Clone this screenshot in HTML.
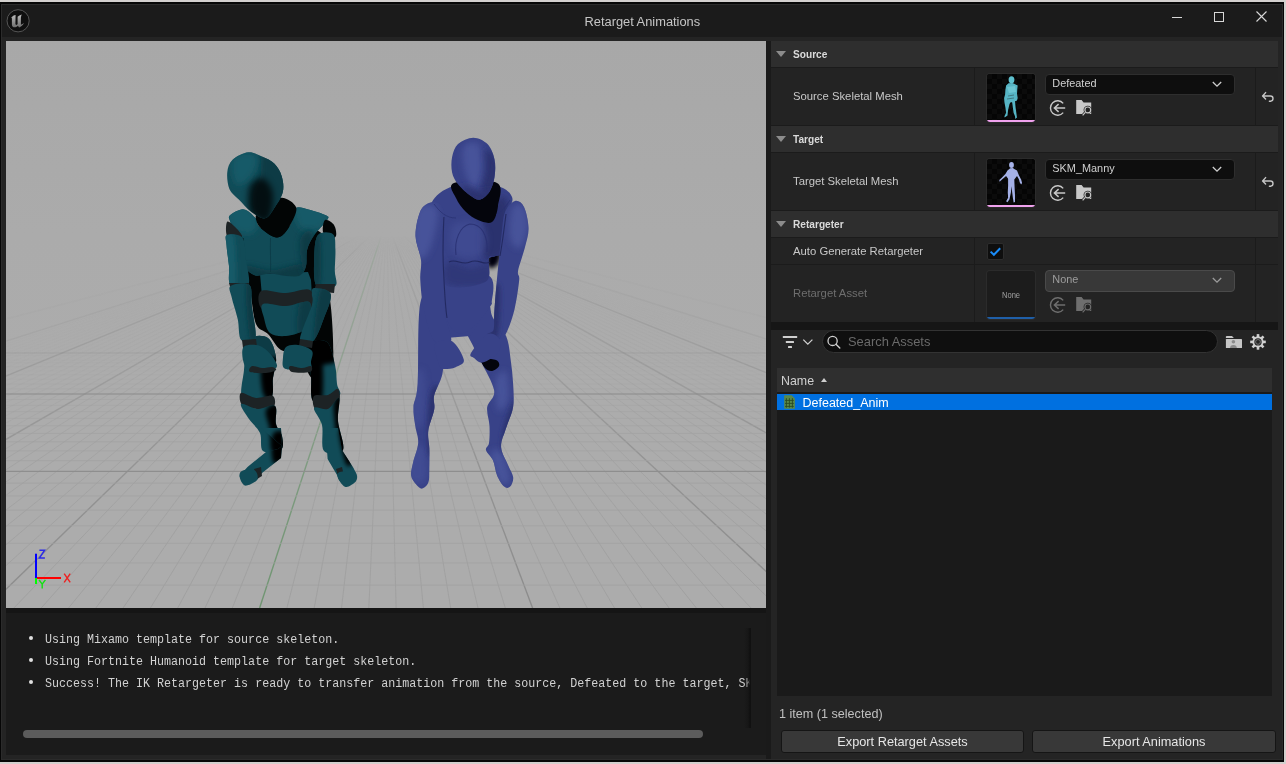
<!DOCTYPE html>
<html><head><meta charset="utf-8">
<style>
*{box-sizing:border-box;margin:0;padding:0}
html,body{width:1286px;height:764px;overflow:hidden;background:#d3d0ce;font-family:"Liberation Sans",sans-serif;-webkit-font-smoothing:antialiased}
.a{position:absolute}
.t{position:absolute;white-space:nowrap;line-height:1}
.hdr{position:absolute;left:771px;width:507px;height:26px;background:#2e2e2e}
.row{position:absolute;left:771px;width:507px;background:#232323}
.sep{position:absolute;left:771px;width:507px;height:1px;background:#1a1a1a}
.tri{position:absolute;width:0;height:0;border-left:5.2px solid transparent;border-right:5.2px solid transparent;border-top:6.4px solid #8c8c8c}
.ht{position:absolute;left:793px;font-size:10.9px;font-weight:bold;color:#dadada;white-space:nowrap;line-height:1;transform:scaleX(0.93);transform-origin:0 0}
.lbl{position:absolute;left:793px;font-size:11.3px;color:#c8c8c8;white-space:nowrap;line-height:1}
.vdiv{position:absolute;width:1px;background:#1b1b1b}
.thumb{position:absolute;left:987px;width:48px;height:48px;border-radius:3px;background:#050505;overflow:hidden;box-shadow:0 0 0 1px #2b2b2b}
.combo{position:absolute;left:1045px;width:190px;height:21px;border-radius:4px;background:#0e0e0e;border:1px solid #2e2e2e}
.ct{position:absolute;left:6.3px;top:3.7px;font-size:10.9px;color:#d0d0d0;white-space:nowrap;line-height:1}
.chev{position:absolute;left:166.2px;top:6px}
.btn{position:absolute;top:729.5px;height:23px;border-radius:3px;background:#383838;border:1px solid #151515;color:#e6e6e6;font-size:12.75px;text-align:center;line-height:21px}
</style></head><body><div style="position:absolute;left:0;top:0;width:1286px;height:764px;overflow:hidden;will-change:transform">
<!-- window -->
<div class="a" style="left:0;top:2px;width:1284px;height:760px;background:#060606"></div>
<div class="a" style="left:1px;top:4px;width:1282px;height:756px;background:#2b2b2b"></div>
<div class="a" style="left:2px;top:5px;width:1280px;height:32px;background:#1b1b1b"></div>
<div class="a" style="left:2px;top:37px;width:1280px;height:722px;background:#242424"></div>

<!-- title bar -->
<svg class="a" style="left:0;top:0" width="40" height="40" viewBox="0 0 40 40">
  <defs><linearGradient id="ug" x1="0" y1="0" x2="0" y2="1"><stop offset="0" stop-color="#bdbdbd"/><stop offset="1" stop-color="#6e6e6e"/></linearGradient></defs>
  <circle cx="18.1" cy="20.8" r="11.1" fill="#0f0f0f" stroke="#5c5c5c" stroke-width="0.9"/>
  <path d="M11.2 17.8 C12.4 16 14 15.2 15.6 15 L15.4 23.8 C15.4 25 16.4 25.2 17.2 24.4 L17.6 24.1 L17.6 16.8 C18.6 15.8 20 15 21.8 14.4 C21.1 15.8 20.9 17 20.9 18.6 L20.9 24.8 C21.9 24.4 22.9 23.8 24 23 C23 25.2 21.1 26.8 19.1 27.4 L17.9 25.8 C16.5 27.2 14.7 27.6 13.5 27.2 C12.3 26.6 11.9 25.4 11.9 24.2 L11.9 18.2 Z" fill="url(#ug)"/>
</svg>
<div class="t" style="left:584.5px;top:15.5px;font-size:12.85px;color:#c6c6c6">Retarget Animations</div>
<div class="a" style="left:1172px;top:17px;width:10px;height:1px;background:#d8d8d8"></div>
<div class="a" style="left:1214px;top:12px;width:10px;height:10px;border:1px solid #d8d8d8"></div>
<svg class="a" style="left:1255.5px;top:11px" width="11" height="11" viewBox="0 0 11 11"><path d="M0.5 0.5 L10.5 10.5 M10.5 0.5 L0.5 10.5" stroke="#d8d8d8" stroke-width="1.1"/></svg>

<!-- viewport -->
<div class="a" id="vp" style="left:6px;top:41px;width:760px;height:567px;background:#ababab;overflow:hidden">
<svg class="a" style="left:0;top:0" width="760" height="567" viewBox="0 0 760 567">
<defs><linearGradient id="bg" x1="0" y1="0" x2="0" y2="1"><stop offset="0" stop-color="#a8a8a8"/><stop offset="0.34" stop-color="#ababab"/><stop offset="0.6" stop-color="#acacac"/><stop offset="1" stop-color="#acacac"/></linearGradient><linearGradient id="vm" x1="0" y1="0" x2="0" y2="1"><stop offset="0" stop-color="#fff" stop-opacity="0"/><stop offset="0.344" stop-color="#fff" stop-opacity="0"/><stop offset="0.370" stop-color="#fff" stop-opacity="0.22"/><stop offset="0.459" stop-color="#fff" stop-opacity="0.33"/><stop offset="0.582" stop-color="#fff" stop-opacity="0.47"/><stop offset="0.741" stop-color="#fff" stop-opacity="0.75"/><stop offset="1" stop-color="#fff" stop-opacity="1"/></linearGradient><mask id="vmask" maskUnits="userSpaceOnUse" x="0" y="0" width="760" height="567"><rect width="760" height="567" fill="url(#vm)"/></mask></defs>
<rect width="760" height="567" fill="url(#bg)"/>
<g mask="url(#vmask)">
<line x1="380.50" y1="179.00" x2="-1111.40" y2="567" stroke="#8c8c8c" stroke-width="1.4" stroke-opacity="0.17"/>
<line x1="380.50" y1="179.00" x2="-838.40" y2="567" stroke="#8c8c8c" stroke-width="1.4" stroke-opacity="0.54"/>
<line x1="380.50" y1="179.00" x2="-811.10" y2="567" stroke="#9d9d9d" stroke-width="0.8" stroke-opacity="0.05"/>
<line x1="380.50" y1="179.00" x2="-783.80" y2="567" stroke="#9d9d9d" stroke-width="0.8" stroke-opacity="0.07"/>
<line x1="380.50" y1="179.00" x2="-756.50" y2="567" stroke="#9d9d9d" stroke-width="0.8" stroke-opacity="0.10"/>
<line x1="380.50" y1="179.00" x2="-729.20" y2="567" stroke="#9d9d9d" stroke-width="0.8" stroke-opacity="0.12"/>
<line x1="380.50" y1="179.00" x2="-701.90" y2="567" stroke="#9d9d9d" stroke-width="0.8" stroke-opacity="0.14"/>
<line x1="380.50" y1="179.00" x2="-674.60" y2="567" stroke="#9d9d9d" stroke-width="0.8" stroke-opacity="0.17"/>
<line x1="380.50" y1="179.00" x2="-647.30" y2="567" stroke="#9d9d9d" stroke-width="0.8" stroke-opacity="0.20"/>
<line x1="380.50" y1="179.00" x2="-620.00" y2="567" stroke="#9d9d9d" stroke-width="0.8" stroke-opacity="0.23"/>
<line x1="380.50" y1="179.00" x2="-592.70" y2="567" stroke="#9d9d9d" stroke-width="0.8" stroke-opacity="0.26"/>
<line x1="380.50" y1="179.00" x2="-565.40" y2="567" stroke="#8c8c8c" stroke-width="1.4" stroke-opacity="1.00"/>
<line x1="380.50" y1="179.00" x2="-538.10" y2="567" stroke="#9d9d9d" stroke-width="0.8" stroke-opacity="0.33"/>
<line x1="380.50" y1="179.00" x2="-510.80" y2="567" stroke="#9d9d9d" stroke-width="0.8" stroke-opacity="0.37"/>
<line x1="380.50" y1="179.00" x2="-483.50" y2="567" stroke="#9d9d9d" stroke-width="0.8" stroke-opacity="0.41"/>
<line x1="380.50" y1="179.00" x2="-456.20" y2="567" stroke="#9d9d9d" stroke-width="0.8" stroke-opacity="0.46"/>
<line x1="380.50" y1="179.00" x2="-428.90" y2="567" stroke="#9d9d9d" stroke-width="0.8" stroke-opacity="0.51"/>
<line x1="380.50" y1="179.00" x2="-401.60" y2="567" stroke="#9d9d9d" stroke-width="0.8" stroke-opacity="0.56"/>
<line x1="380.50" y1="179.00" x2="-374.30" y2="567" stroke="#9d9d9d" stroke-width="0.8" stroke-opacity="0.62"/>
<line x1="380.50" y1="179.00" x2="-347.00" y2="567" stroke="#9d9d9d" stroke-width="0.8" stroke-opacity="0.68"/>
<line x1="380.50" y1="179.00" x2="-319.70" y2="567" stroke="#9d9d9d" stroke-width="0.8" stroke-opacity="0.75"/>
<line x1="380.50" y1="179.00" x2="-292.40" y2="567" stroke="#8c8c8c" stroke-width="1.4" stroke-opacity="1.00"/>
<line x1="380.50" y1="179.00" x2="-265.10" y2="567" stroke="#9d9d9d" stroke-width="0.8" stroke-opacity="0.91"/>
<line x1="380.50" y1="179.00" x2="-237.80" y2="567" stroke="#9d9d9d" stroke-width="0.8" stroke-opacity="0.99"/>
<line x1="380.50" y1="179.00" x2="-210.50" y2="567" stroke="#9d9d9d" stroke-width="0.8" stroke-opacity="1.00"/>
<line x1="380.50" y1="179.00" x2="-183.20" y2="567" stroke="#9d9d9d" stroke-width="0.8" stroke-opacity="1.00"/>
<line x1="380.50" y1="179.00" x2="-155.90" y2="567" stroke="#9d9d9d" stroke-width="0.8" stroke-opacity="1.00"/>
<line x1="380.50" y1="179.00" x2="-128.60" y2="567" stroke="#9d9d9d" stroke-width="0.8" stroke-opacity="1.00"/>
<line x1="380.50" y1="179.00" x2="-101.30" y2="567" stroke="#9d9d9d" stroke-width="0.8" stroke-opacity="1.00"/>
<line x1="380.50" y1="179.00" x2="-74.00" y2="567" stroke="#9d9d9d" stroke-width="0.8" stroke-opacity="1.00"/>
<line x1="380.50" y1="179.00" x2="-46.70" y2="567" stroke="#9d9d9d" stroke-width="0.8" stroke-opacity="1.00"/>
<line x1="380.50" y1="179.00" x2="-19.40" y2="567" stroke="#8c8c8c" stroke-width="1.4" stroke-opacity="1.00"/>
<line x1="380.50" y1="179.00" x2="7.90" y2="567" stroke="#9d9d9d" stroke-width="0.8" stroke-opacity="1.00"/>
<line x1="380.50" y1="179.00" x2="35.20" y2="567" stroke="#9d9d9d" stroke-width="0.8" stroke-opacity="1.00"/>
<line x1="380.50" y1="179.00" x2="62.50" y2="567" stroke="#9d9d9d" stroke-width="0.8" stroke-opacity="1.00"/>
<line x1="380.50" y1="179.00" x2="89.80" y2="567" stroke="#9d9d9d" stroke-width="0.8" stroke-opacity="1.00"/>
<line x1="380.50" y1="179.00" x2="117.10" y2="567" stroke="#9d9d9d" stroke-width="0.8" stroke-opacity="1.00"/>
<line x1="380.50" y1="179.00" x2="144.40" y2="567" stroke="#9d9d9d" stroke-width="0.8" stroke-opacity="1.00"/>
<line x1="380.50" y1="179.00" x2="171.70" y2="567" stroke="#9d9d9d" stroke-width="0.8" stroke-opacity="1.00"/>
<line x1="380.50" y1="179.00" x2="199.00" y2="567" stroke="#9d9d9d" stroke-width="0.8" stroke-opacity="1.00"/>
<line x1="380.50" y1="179.00" x2="226.30" y2="567" stroke="#9d9d9d" stroke-width="0.8" stroke-opacity="1.00"/>
<line x1="380.50" y1="179.00" x2="253.60" y2="567" stroke="#6f9571" stroke-width="1.4" stroke-opacity="1.00"/>
<line x1="380.50" y1="179.00" x2="280.90" y2="567" stroke="#9d9d9d" stroke-width="0.8" stroke-opacity="1.00"/>
<line x1="380.50" y1="179.00" x2="308.20" y2="567" stroke="#9d9d9d" stroke-width="0.8" stroke-opacity="1.00"/>
<line x1="380.50" y1="179.00" x2="335.50" y2="567" stroke="#9d9d9d" stroke-width="0.8" stroke-opacity="1.00"/>
<line x1="380.50" y1="179.00" x2="362.80" y2="567" stroke="#9d9d9d" stroke-width="0.8" stroke-opacity="1.00"/>
<line x1="380.50" y1="179.00" x2="390.10" y2="567" stroke="#9d9d9d" stroke-width="0.8" stroke-opacity="1.00"/>
<line x1="380.50" y1="179.00" x2="417.40" y2="567" stroke="#9d9d9d" stroke-width="0.8" stroke-opacity="1.00"/>
<line x1="380.50" y1="179.00" x2="444.70" y2="567" stroke="#9d9d9d" stroke-width="0.8" stroke-opacity="1.00"/>
<line x1="380.50" y1="179.00" x2="472.00" y2="567" stroke="#9d9d9d" stroke-width="0.8" stroke-opacity="1.00"/>
<line x1="380.50" y1="179.00" x2="499.30" y2="567" stroke="#9d9d9d" stroke-width="0.8" stroke-opacity="1.00"/>
<line x1="380.50" y1="179.00" x2="526.60" y2="567" stroke="#8c8c8c" stroke-width="1.4" stroke-opacity="1.00"/>
<line x1="380.50" y1="179.00" x2="553.90" y2="567" stroke="#9d9d9d" stroke-width="0.8" stroke-opacity="1.00"/>
<line x1="380.50" y1="179.00" x2="581.20" y2="567" stroke="#9d9d9d" stroke-width="0.8" stroke-opacity="1.00"/>
<line x1="380.50" y1="179.00" x2="608.50" y2="567" stroke="#9d9d9d" stroke-width="0.8" stroke-opacity="1.00"/>
<line x1="380.50" y1="179.00" x2="635.80" y2="567" stroke="#9d9d9d" stroke-width="0.8" stroke-opacity="1.00"/>
<line x1="380.50" y1="179.00" x2="663.10" y2="567" stroke="#9d9d9d" stroke-width="0.8" stroke-opacity="1.00"/>
<line x1="380.50" y1="179.00" x2="690.40" y2="567" stroke="#9d9d9d" stroke-width="0.8" stroke-opacity="1.00"/>
<line x1="380.50" y1="179.00" x2="717.70" y2="567" stroke="#9d9d9d" stroke-width="0.8" stroke-opacity="1.00"/>
<line x1="380.50" y1="179.00" x2="745.00" y2="567" stroke="#9d9d9d" stroke-width="0.8" stroke-opacity="1.00"/>
<line x1="380.50" y1="179.00" x2="772.30" y2="567" stroke="#9d9d9d" stroke-width="0.8" stroke-opacity="1.00"/>
<line x1="380.50" y1="179.00" x2="799.60" y2="567" stroke="#8c8c8c" stroke-width="1.4" stroke-opacity="1.00"/>
<line x1="380.50" y1="179.00" x2="826.90" y2="567" stroke="#9d9d9d" stroke-width="0.8" stroke-opacity="1.00"/>
<line x1="380.50" y1="179.00" x2="854.20" y2="567" stroke="#9d9d9d" stroke-width="0.8" stroke-opacity="1.00"/>
<line x1="380.50" y1="179.00" x2="881.50" y2="567" stroke="#9d9d9d" stroke-width="0.8" stroke-opacity="1.00"/>
<line x1="380.50" y1="179.00" x2="908.80" y2="567" stroke="#9d9d9d" stroke-width="0.8" stroke-opacity="1.00"/>
<line x1="380.50" y1="179.00" x2="936.10" y2="567" stroke="#9d9d9d" stroke-width="0.8" stroke-opacity="1.00"/>
<line x1="380.50" y1="179.00" x2="963.40" y2="567" stroke="#9d9d9d" stroke-width="0.8" stroke-opacity="1.00"/>
<line x1="380.50" y1="179.00" x2="990.70" y2="567" stroke="#9d9d9d" stroke-width="0.8" stroke-opacity="1.00"/>
<line x1="380.50" y1="179.00" x2="1018.00" y2="567" stroke="#9d9d9d" stroke-width="0.8" stroke-opacity="0.93"/>
<line x1="380.50" y1="179.00" x2="1045.30" y2="567" stroke="#9d9d9d" stroke-width="0.8" stroke-opacity="0.85"/>
<line x1="380.50" y1="179.00" x2="1072.60" y2="567" stroke="#8c8c8c" stroke-width="1.4" stroke-opacity="1.00"/>
<line x1="380.50" y1="179.00" x2="1099.90" y2="567" stroke="#9d9d9d" stroke-width="0.8" stroke-opacity="0.70"/>
<line x1="380.50" y1="179.00" x2="1127.20" y2="567" stroke="#9d9d9d" stroke-width="0.8" stroke-opacity="0.64"/>
<line x1="380.50" y1="179.00" x2="1154.50" y2="567" stroke="#9d9d9d" stroke-width="0.8" stroke-opacity="0.58"/>
<line x1="380.50" y1="179.00" x2="1181.80" y2="567" stroke="#9d9d9d" stroke-width="0.8" stroke-opacity="0.53"/>
<line x1="380.50" y1="179.00" x2="1209.10" y2="567" stroke="#9d9d9d" stroke-width="0.8" stroke-opacity="0.48"/>
<line x1="380.50" y1="179.00" x2="1236.40" y2="567" stroke="#9d9d9d" stroke-width="0.8" stroke-opacity="0.43"/>
<line x1="380.50" y1="179.00" x2="1263.70" y2="567" stroke="#9d9d9d" stroke-width="0.8" stroke-opacity="0.38"/>
<line x1="380.50" y1="179.00" x2="1291.00" y2="567" stroke="#9d9d9d" stroke-width="0.8" stroke-opacity="0.34"/>
<line x1="380.50" y1="179.00" x2="1318.30" y2="567" stroke="#9d9d9d" stroke-width="0.8" stroke-opacity="0.31"/>
<line x1="380.50" y1="179.00" x2="1345.60" y2="567" stroke="#8c8c8c" stroke-width="1.4" stroke-opacity="1.00"/>
<line x1="380.50" y1="179.00" x2="1372.90" y2="567" stroke="#9d9d9d" stroke-width="0.8" stroke-opacity="0.24"/>
<line x1="380.50" y1="179.00" x2="1400.20" y2="567" stroke="#9d9d9d" stroke-width="0.8" stroke-opacity="0.21"/>
<line x1="380.50" y1="179.00" x2="1427.50" y2="567" stroke="#9d9d9d" stroke-width="0.8" stroke-opacity="0.18"/>
<line x1="380.50" y1="179.00" x2="1454.80" y2="567" stroke="#9d9d9d" stroke-width="0.8" stroke-opacity="0.15"/>
<line x1="380.50" y1="179.00" x2="1482.10" y2="567" stroke="#9d9d9d" stroke-width="0.8" stroke-opacity="0.13"/>
<line x1="380.50" y1="179.00" x2="1509.40" y2="567" stroke="#9d9d9d" stroke-width="0.8" stroke-opacity="0.10"/>
<line x1="380.50" y1="179.00" x2="1536.70" y2="567" stroke="#9d9d9d" stroke-width="0.8" stroke-opacity="0.08"/>
<line x1="380.50" y1="179.00" x2="1564.00" y2="567" stroke="#9d9d9d" stroke-width="0.8" stroke-opacity="0.06"/>
<line x1="380.50" y1="179.00" x2="1591.30" y2="567" stroke="#9d9d9d" stroke-width="0.8" stroke-opacity="0.04"/>
<line x1="380.50" y1="179.00" x2="1618.60" y2="567" stroke="#8c8c8c" stroke-width="1.4" stroke-opacity="0.51"/>
<line x1="380.50" y1="179.00" x2="1891.60" y2="567" stroke="#8c8c8c" stroke-width="1.4" stroke-opacity="0.15"/>
</g>
<line x1="0" y1="631.90" x2="760" y2="631.90" stroke="#8e8e8e" stroke-width="1.4" stroke-opacity="1.00"/>
<line x1="0" y1="598.29" x2="760" y2="598.29" stroke="#a1a1a1" stroke-width="0.8" stroke-opacity="1.00"/>
<line x1="0" y1="569.32" x2="760" y2="569.32" stroke="#a1a1a1" stroke-width="0.8" stroke-opacity="1.00"/>
<line x1="0" y1="544.10" x2="760" y2="544.10" stroke="#a1a1a1" stroke-width="0.8" stroke-opacity="1.00"/>
<line x1="0" y1="521.94" x2="760" y2="521.94" stroke="#a1a1a1" stroke-width="0.8" stroke-opacity="1.00"/>
<line x1="0" y1="502.31" x2="760" y2="502.31" stroke="#a1a1a1" stroke-width="0.8" stroke-opacity="1.00"/>
<line x1="0" y1="484.81" x2="760" y2="484.81" stroke="#a1a1a1" stroke-width="0.8" stroke-opacity="1.00"/>
<line x1="0" y1="469.11" x2="760" y2="469.11" stroke="#a1a1a1" stroke-width="0.8" stroke-opacity="1.00"/>
<line x1="0" y1="454.94" x2="760" y2="454.94" stroke="#a1a1a1" stroke-width="0.8" stroke-opacity="1.00"/>
<line x1="0" y1="442.09" x2="760" y2="442.09" stroke="#a1a1a1" stroke-width="0.8" stroke-opacity="1.00"/>
<line x1="0" y1="430.38" x2="760" y2="430.38" stroke="#8e8e8e" stroke-width="1.4" stroke-opacity="1.00"/>
<line x1="0" y1="419.67" x2="760" y2="419.67" stroke="#a1a1a1" stroke-width="0.8" stroke-opacity="1.00"/>
<line x1="0" y1="409.84" x2="760" y2="409.84" stroke="#a1a1a1" stroke-width="0.8" stroke-opacity="0.92"/>
<line x1="0" y1="400.78" x2="760" y2="400.78" stroke="#a1a1a1" stroke-width="0.8" stroke-opacity="0.83"/>
<line x1="0" y1="392.40" x2="760" y2="392.40" stroke="#a1a1a1" stroke-width="0.8" stroke-opacity="0.76"/>
<line x1="0" y1="384.63" x2="760" y2="384.63" stroke="#a1a1a1" stroke-width="0.8" stroke-opacity="0.69"/>
<line x1="0" y1="377.41" x2="760" y2="377.41" stroke="#a1a1a1" stroke-width="0.8" stroke-opacity="0.62"/>
<line x1="0" y1="370.68" x2="760" y2="370.68" stroke="#a1a1a1" stroke-width="0.8" stroke-opacity="0.56"/>
<line x1="0" y1="364.39" x2="760" y2="364.39" stroke="#a1a1a1" stroke-width="0.8" stroke-opacity="0.50"/>
<line x1="0" y1="358.50" x2="760" y2="358.50" stroke="#a1a1a1" stroke-width="0.8" stroke-opacity="0.45"/>
<line x1="0" y1="352.97" x2="760" y2="352.97" stroke="#8e8e8e" stroke-width="1.4" stroke-opacity="0.74"/>
<line x1="0" y1="347.78" x2="760" y2="347.78" stroke="#a1a1a1" stroke-width="0.8" stroke-opacity="0.35"/>
<line x1="0" y1="342.88" x2="760" y2="342.88" stroke="#a1a1a1" stroke-width="0.8" stroke-opacity="0.31"/>
<line x1="0" y1="338.26" x2="760" y2="338.26" stroke="#a1a1a1" stroke-width="0.8" stroke-opacity="0.27"/>
<line x1="0" y1="333.89" x2="760" y2="333.89" stroke="#a1a1a1" stroke-width="0.8" stroke-opacity="0.23"/>
<line x1="0" y1="329.76" x2="760" y2="329.76" stroke="#a1a1a1" stroke-width="0.8" stroke-opacity="0.19"/>
<line x1="0" y1="325.84" x2="760" y2="325.84" stroke="#a1a1a1" stroke-width="0.8" stroke-opacity="0.15"/>
<line x1="0" y1="322.12" x2="760" y2="322.12" stroke="#a1a1a1" stroke-width="0.8" stroke-opacity="0.12"/>
<line x1="0" y1="318.59" x2="760" y2="318.59" stroke="#a1a1a1" stroke-width="0.8" stroke-opacity="0.09"/>
<line x1="0" y1="315.22" x2="760" y2="315.22" stroke="#a1a1a1" stroke-width="0.8" stroke-opacity="0.06"/>
<line x1="0" y1="312.01" x2="760" y2="312.01" stroke="#8e8e8e" stroke-width="1.4" stroke-opacity="0.23"/>
</svg>
<svg class="a" style="left:0;top:0" width="760" height="567" viewBox="6 41 760 567"><defs><filter id="bl2" x="-50%" y="-50%" width="200%" height="200%"><feGaussianBlur stdDeviation="2"/></filter><filter id="bl3" x="-50%" y="-50%" width="200%" height="200%"><feGaussianBlur stdDeviation="3"/></filter></defs><path d="M244.0 232.0 C256.7 226.0 307.7 222.7 320.0 232.0 C332.3 241.3 316.3 276.7 318.0 288.0 C319.7 299.3 327.7 286.0 330.0 300.0 C332.3 314.0 335.0 359.0 332.0 372.0 C329.0 385.0 317.3 381.0 312.0 378.0 C306.7 375.0 305.2 358.7 300.0 354.0 C294.8 349.3 286.3 353.3 281.0 350.0 C275.7 346.7 272.2 338.3 268.0 334.0 C263.8 329.7 259.0 331.3 256.0 324.0 C253.0 316.7 252.0 299.3 250.0 290.0 C248.0 280.7 245.0 277.7 244.0 268.0 C243.0 258.3 231.3 238.0 244.0 232.0Z" fill="#020505" />
<clipPath id="c1"><path d="M249.0 340.0 C253.0 334.7 263.5 335.0 268.0 338.0 C272.5 341.0 275.2 351.3 276.0 358.0 C276.8 364.7 274.0 371.2 273.0 378.0 C272.0 384.8 275.0 395.3 270.0 399.0 C265.0 402.7 247.3 404.8 243.0 400.0 C238.7 395.2 243.0 380.0 244.0 370.0 C245.0 360.0 245.0 345.3 249.0 340.0Z"/></clipPath>
<path d="M249.0 340.0 C253.0 334.7 263.5 335.0 268.0 338.0 C272.5 341.0 275.2 351.3 276.0 358.0 C276.8 364.7 274.0 371.2 273.0 378.0 C272.0 384.8 275.0 395.3 270.0 399.0 C265.0 402.7 247.3 404.8 243.0 400.0 C238.7 395.2 243.0 380.0 244.0 370.0 C245.0 360.0 245.0 345.3 249.0 340.0Z" fill="#114b57"/>
<g clip-path="url(#c1)">
<path d="M262.0 360.0 C264.7 353.3 277.0 350.0 280.0 356.0 C283.0 362.0 282.7 389.3 280.0 396.0 C277.3 402.7 267.0 402.0 264.0 396.0 C261.0 390.0 259.3 366.7 262.0 360.0Z" fill="#020505" filter="url(#bl2)"/>
<path d="M240.0 330.0 C247.0 326.3 275.0 325.7 282.0 330.0 C289.0 334.3 289.0 352.3 282.0 356.0 C275.0 359.7 247.0 356.3 240.0 352.0 C233.0 347.7 233.0 333.7 240.0 330.0Z" fill="#0a3a45" filter="url(#bl2)"/>
</g>
<clipPath id="c2"><path d="M309.0 345.0 C311.7 339.3 322.7 338.7 327.0 342.0 C331.3 345.3 333.3 358.0 335.0 365.0 C336.7 372.0 336.3 378.8 337.0 384.0 C337.7 389.2 342.8 393.0 339.0 396.0 C335.2 399.0 318.7 405.3 314.0 402.0 C309.3 398.7 311.8 385.5 311.0 376.0 C310.2 366.5 306.3 350.7 309.0 345.0Z"/></clipPath>
<path d="M309.0 345.0 C311.7 339.3 322.7 338.7 327.0 342.0 C331.3 345.3 333.3 358.0 335.0 365.0 C336.7 372.0 336.3 378.8 337.0 384.0 C337.7 389.2 342.8 393.0 339.0 396.0 C335.2 399.0 318.7 405.3 314.0 402.0 C309.3 398.7 311.8 385.5 311.0 376.0 C310.2 366.5 306.3 350.7 309.0 345.0Z" fill="#114b57"/>
<g clip-path="url(#c2)">
<path d="M304.0 340.0 C306.3 330.0 317.0 330.0 320.0 340.0 C323.0 350.0 324.3 390.0 322.0 400.0 C319.7 410.0 309.0 410.0 306.0 400.0 C303.0 390.0 301.7 350.0 304.0 340.0Z" fill="#020505" filter="url(#bl2)"/>
<path d="M300.0 330.0 C306.7 324.7 333.3 325.0 340.0 330.0 C346.7 335.0 346.7 354.7 340.0 360.0 C333.3 365.3 306.7 367.0 300.0 362.0 C293.3 357.0 293.3 335.3 300.0 330.0Z" fill="#020505" filter="url(#bl2)"/>
</g>
<path d="M241.0 393.0 C243.3 391.8 250.7 397.5 256.0 398.0 C261.3 398.5 270.2 394.3 273.0 396.0 C275.8 397.7 275.8 405.8 273.0 408.0 C270.2 410.2 261.2 409.5 256.0 409.0 C250.8 408.5 244.5 407.7 242.0 405.0 C239.5 402.3 238.7 394.2 241.0 393.0Z" fill="#1d2325" />
<path d="M314.0 396.0 C316.2 393.7 324.0 396.2 328.0 395.0 C332.0 393.8 336.2 387.8 338.0 389.0 C339.8 390.2 340.8 398.5 339.0 402.0 C337.2 405.5 331.0 408.8 327.0 410.0 C323.0 411.2 317.2 411.3 315.0 409.0 C312.8 406.7 311.8 398.3 314.0 396.0Z" fill="#1d2325" />
<clipPath id="c3"><path d="M241.0 404.0 C242.5 402.3 252.3 408.7 258.0 409.0 C263.7 409.3 272.0 403.5 275.0 406.0 C278.0 408.5 274.8 419.0 276.0 424.0 C277.2 429.0 281.2 431.7 282.0 436.0 C282.8 440.3 284.2 447.5 281.0 450.0 C277.8 452.5 266.5 453.8 263.0 451.0 C259.5 448.2 262.3 438.3 260.0 433.0 C257.7 427.7 252.2 423.8 249.0 419.0 C245.8 414.2 239.5 405.7 241.0 404.0Z"/></clipPath>
<path d="M241.0 404.0 C242.5 402.3 252.3 408.7 258.0 409.0 C263.7 409.3 272.0 403.5 275.0 406.0 C278.0 408.5 274.8 419.0 276.0 424.0 C277.2 429.0 281.2 431.7 282.0 436.0 C282.8 440.3 284.2 447.5 281.0 450.0 C277.8 452.5 266.5 453.8 263.0 451.0 C259.5 448.2 262.3 438.3 260.0 433.0 C257.7 427.7 252.2 423.8 249.0 419.0 C245.8 414.2 239.5 405.7 241.0 404.0Z" fill="#114b57"/>
<g clip-path="url(#c3)">
<path d="M266.0 410.0 C267.7 405.7 277.0 401.7 280.0 404.0 C283.0 406.3 283.0 416.0 284.0 424.0 C285.0 432.0 288.0 447.3 286.0 452.0 C284.0 456.7 274.7 455.7 272.0 452.0 C269.3 448.3 271.0 437.0 270.0 430.0 C269.0 423.0 264.3 414.3 266.0 410.0Z" fill="#020505" filter="url(#bl2)"/>
</g>
<clipPath id="c4"><path d="M314.0 408.0 C315.0 405.3 323.8 410.7 328.0 409.0 C332.2 407.3 337.3 396.0 339.0 398.0 C340.7 400.0 337.3 412.3 338.0 421.0 C338.7 429.7 345.3 445.0 343.0 450.0 C340.7 455.0 327.5 455.2 324.0 451.0 C320.5 446.8 323.7 432.2 322.0 425.0 C320.3 417.8 313.0 410.7 314.0 408.0Z"/></clipPath>
<path d="M314.0 408.0 C315.0 405.3 323.8 410.7 328.0 409.0 C332.2 407.3 337.3 396.0 339.0 398.0 C340.7 400.0 337.3 412.3 338.0 421.0 C338.7 429.7 345.3 445.0 343.0 450.0 C340.7 455.0 327.5 455.2 324.0 451.0 C320.5 446.8 323.7 432.2 322.0 425.0 C320.3 417.8 313.0 410.7 314.0 408.0Z" fill="#114b57"/>
<g clip-path="url(#c4)">
<path d="M334.0 402.0 C335.2 397.2 340.3 392.8 342.0 396.0 C343.7 399.2 343.0 411.7 344.0 421.0 C345.0 430.3 349.0 446.8 348.0 452.0 C347.0 457.2 340.2 456.5 338.0 452.0 C335.8 447.5 335.7 433.3 335.0 425.0 C334.3 416.7 332.8 406.8 334.0 402.0Z" fill="#020505" filter="url(#bl2)"/>
</g>
<clipPath id="c5"><path d="M261.0 428.0 L281.0 428.0 L282.0 446.0 L278.0 449.0 L266.0 452.0 L247.5 467.0 L239.5 476.0 L245.0 485.5 L257.0 480.0 L262.0 473.0 L281.0 458.0 L282.0 446.0Z"/></clipPath>
<path d="M261.0 428.0 L281.0 428.0 L282.0 446.0 L278.0 449.0 L266.0 452.0 L247.5 467.0 L239.5 476.0 L245.0 485.5 L257.0 480.0 L262.0 473.0 L281.0 458.0 L282.0 446.0Z" fill="#114b57"/>
<g clip-path="url(#c5)">
<path d="M273.0 434.0 C275.2 429.3 284.2 430.0 286.0 434.0 C287.8 438.0 286.2 453.3 284.0 458.0 C281.8 462.7 274.8 466.0 273.0 462.0 C271.2 458.0 270.8 438.7 273.0 434.0Z" fill="#020505" filter="url(#bl2)"/>
</g>
<path d="M254.0 469.0 L261.0 467.0 L262.0 476.0 L257.0 479.0Z" fill="#1d2325" />
<path d="M239.5 476.0 C239.2 473.5 240.4 471.4 243.0 470.5 C245.6 469.6 252.7 468.9 255.0 470.5 C257.3 472.1 258.7 477.5 257.0 480.0 C255.3 482.5 247.9 486.2 245.0 485.5 C242.1 484.8 239.8 478.5 239.5 476.0Z" fill="#114b57" />
<clipPath id="c6"><path d="M323.0 428.0 L338.0 428.0 L342.0 450.0 L353.5 468.0 L356.0 473.0 L356.0 481.0 L346.0 487.0 L339.0 480.0 L337.0 475.0 L327.6 459.0 L327.0 450.0Z"/></clipPath>
<path d="M323.0 428.0 L338.0 428.0 L342.0 450.0 L353.5 468.0 L356.0 473.0 L356.0 481.0 L346.0 487.0 L339.0 480.0 L337.0 475.0 L327.6 459.0 L327.0 450.0Z" fill="#114b57"/>
<g clip-path="url(#c6)">
<path d="M339.0 432.0 C339.2 426.7 344.7 427.3 347.0 432.0 C349.3 436.7 353.2 454.7 353.0 460.0 C352.8 465.3 348.3 468.7 346.0 464.0 C343.7 459.3 338.8 437.3 339.0 432.0Z" fill="#020505" filter="url(#bl2)"/>
</g>
<path d="M336.0 469.0 L342.0 467.0 L344.0 476.0 L339.0 479.0Z" fill="#1d2325" />
<path d="M338.0 473.0 C339.5 471.5 345.0 471.0 348.0 471.0 C351.0 471.0 354.7 471.3 356.0 473.0 C357.3 474.7 357.7 478.7 356.0 481.0 C354.3 483.3 348.8 487.2 346.0 487.0 C343.2 486.8 340.3 482.3 339.0 480.0 C337.7 477.7 336.5 474.5 338.0 473.0Z" fill="#114b57" />
<path d="M260.0 274.0 L308.0 272.0 L311.0 280.0 L312.0 296.0 L286.0 298.0 L262.0 296.0Z" fill="#114b57" />
<path d="M261.0 291.0 C265.0 288.3 277.8 293.2 286.0 293.0 C294.2 292.8 305.8 287.5 310.0 290.0 C314.2 292.5 315.0 304.5 311.0 308.0 C307.0 311.5 294.2 310.8 286.0 311.0 C277.8 311.2 266.2 312.3 262.0 309.0 C257.8 305.7 257.0 293.7 261.0 291.0Z" fill="#1d2325" />
<clipPath id="c7"><path d="M263.0 304.0 C266.7 302.0 278.3 306.3 286.0 306.0 C293.7 305.7 305.2 300.0 309.0 302.0 C312.8 304.0 309.8 313.3 309.0 318.0 C308.2 322.7 307.8 327.0 304.0 330.0 C300.2 333.0 291.7 335.5 286.0 336.0 C280.3 336.5 273.7 336.0 270.0 333.0 C266.3 330.0 265.2 322.8 264.0 318.0 C262.8 313.2 259.3 306.0 263.0 304.0Z"/></clipPath>
<path d="M263.0 304.0 C266.7 302.0 278.3 306.3 286.0 306.0 C293.7 305.7 305.2 300.0 309.0 302.0 C312.8 304.0 309.8 313.3 309.0 318.0 C308.2 322.7 307.8 327.0 304.0 330.0 C300.2 333.0 291.7 335.5 286.0 336.0 C280.3 336.5 273.7 336.0 270.0 333.0 C266.3 330.0 265.2 322.8 264.0 318.0 C262.8 313.2 259.3 306.0 263.0 304.0Z" fill="#114b57"/>
<g clip-path="url(#c7)">
<path d="M300.0 300.0 C302.8 294.0 313.0 293.7 315.0 300.0 C317.0 306.3 314.8 332.0 312.0 338.0 C309.2 344.0 300.0 342.3 298.0 336.0 C296.0 329.7 297.2 306.0 300.0 300.0Z" fill="#0a3a45" filter="url(#bl3)"/>
</g>
<clipPath id="c8"><path d="M230.0 215.3 C232.3 213.4 239.4 209.0 243.6 209.4 C247.8 209.8 252.8 214.9 255.3 217.7 C257.9 220.4 255.9 222.8 258.9 225.9 C261.8 229.0 269.1 234.9 273.0 236.5 C276.9 238.1 279.4 237.5 282.4 235.3 C285.3 233.2 288.5 228.1 290.7 223.6 C292.9 219.1 292.5 210.6 295.4 208.2 C298.3 205.8 303.2 208.2 308.3 209.4 C313.4 210.6 322.9 213.5 326.0 215.3 C329.1 217.1 329.2 216.7 327.2 220.0 C325.2 223.3 317.5 230.4 314.2 235.3 C310.9 240.2 308.6 244.4 307.2 249.5 C305.8 254.6 307.2 261.7 306.0 266.0 C304.8 270.3 303.3 273.7 300.0 275.4 C296.7 277.1 290.9 276.3 286.0 276.0 C281.1 275.7 275.7 273.6 270.6 273.5 C265.5 273.4 259.6 276.6 255.3 275.4 C251.0 274.1 246.6 270.7 244.7 266.0 C242.8 261.3 244.2 252.1 243.6 247.0 C243.0 241.9 243.0 238.6 241.2 235.3 C239.4 232.0 234.9 229.4 233.0 227.0 C231.1 224.6 230.5 222.9 230.0 221.0 C229.5 219.1 227.7 217.2 230.0 215.3Z"/></clipPath>
<path d="M230.0 215.3 C232.3 213.4 239.4 209.0 243.6 209.4 C247.8 209.8 252.8 214.9 255.3 217.7 C257.9 220.4 255.9 222.8 258.9 225.9 C261.8 229.0 269.1 234.9 273.0 236.5 C276.9 238.1 279.4 237.5 282.4 235.3 C285.3 233.2 288.5 228.1 290.7 223.6 C292.9 219.1 292.5 210.6 295.4 208.2 C298.3 205.8 303.2 208.2 308.3 209.4 C313.4 210.6 322.9 213.5 326.0 215.3 C329.1 217.1 329.2 216.7 327.2 220.0 C325.2 223.3 317.5 230.4 314.2 235.3 C310.9 240.2 308.6 244.4 307.2 249.5 C305.8 254.6 307.2 261.7 306.0 266.0 C304.8 270.3 303.3 273.7 300.0 275.4 C296.7 277.1 290.9 276.3 286.0 276.0 C281.1 275.7 275.7 273.6 270.6 273.5 C265.5 273.4 259.6 276.6 255.3 275.4 C251.0 274.1 246.6 270.7 244.7 266.0 C242.8 261.3 244.2 252.1 243.6 247.0 C243.0 241.9 243.0 238.6 241.2 235.3 C239.4 232.0 234.9 229.4 233.0 227.0 C231.1 224.6 230.5 222.9 230.0 221.0 C229.5 219.1 227.7 217.2 230.0 215.3Z" fill="#114b57"/>
<g clip-path="url(#c8)">
<path d="M228.0 208.0 C230.3 204.0 241.0 201.7 246.0 204.0 C251.0 206.3 257.3 217.0 258.0 222.0 C258.7 227.0 254.3 233.0 250.0 234.0 C245.7 235.0 235.7 232.3 232.0 228.0 C228.3 223.7 225.7 212.0 228.0 208.0Z" fill="#175a68" filter="url(#bl3)"/>
<path d="M294.0 204.0 C296.0 200.0 306.0 202.3 312.0 204.0 C318.0 205.7 329.0 209.7 330.0 214.0 C331.0 218.3 323.0 227.7 318.0 230.0 C313.0 232.3 304.0 232.3 300.0 228.0 C296.0 223.7 292.0 208.0 294.0 204.0Z" fill="#175a68" filter="url(#bl3)"/>
<path d="M246.0 266.0 C250.3 264.3 262.3 270.3 272.0 270.0 C281.7 269.7 298.3 262.3 304.0 264.0 C309.7 265.7 311.7 277.3 306.0 280.0 C300.3 282.7 280.0 280.0 270.0 280.0 C260.0 280.0 250.0 282.3 246.0 280.0 C242.0 277.7 241.7 267.7 246.0 266.0Z" fill="#0a3a45" filter="url(#bl3)"/>
<path d="M300.0 240.0 C301.3 233.3 309.3 227.0 312.0 232.0 C314.7 237.0 317.3 263.3 316.0 270.0 C314.7 276.7 306.7 277.0 304.0 272.0 C301.3 267.0 298.7 246.7 300.0 240.0Z" fill="#0a3a45" filter="url(#bl3)"/>
</g>
<path d="M243 238 C244 250 244.5 262 246 272" fill="none" stroke="#031418" stroke-width="1.2" opacity="0.8"/>
<path d="M270.5 238 C270 250 271 262 270.5 272" fill="none" stroke="#0a3440" stroke-width="1" opacity="0.6"/>
<path d="M256.0 215.0 C256.9 213.3 260.0 218.8 264.0 216.0 C268.0 213.2 274.7 199.5 280.0 198.0 C285.3 196.5 294.2 202.7 296.0 207.0 C297.8 211.3 293.3 218.9 291.0 223.6 C288.7 228.3 285.4 233.2 282.4 235.3 C279.4 237.5 276.9 238.1 273.0 236.5 C269.1 234.9 261.7 229.5 258.9 225.9 C256.1 222.3 255.2 216.7 256.0 215.0Z" fill="#020505" />
<path d="M227.0 222.0 C228.2 220.3 231.5 223.7 234.0 226.0 C236.5 228.3 241.7 233.7 242.0 236.0 C242.3 238.3 238.5 240.0 236.0 240.0 C233.5 240.0 228.5 239.0 227.0 236.0 C225.5 233.0 225.8 223.7 227.0 222.0Z" fill="#1d2325" />
<path d="M325.0 220.0 C326.8 218.8 332.2 222.3 334.0 225.0 C335.8 227.7 336.7 233.8 336.0 236.0 C335.3 238.2 332.2 238.7 330.0 238.0 C327.8 237.3 323.8 235.0 323.0 232.0 C322.2 229.0 323.2 221.2 325.0 220.0Z" fill="#020505" />
<clipPath id="c9"><path d="M227.0 235.0 C229.7 233.8 239.2 233.5 242.4 237.7 C245.6 241.9 245.0 252.2 246.0 260.0 C247.0 267.9 250.9 280.7 248.3 284.8 C245.7 288.9 233.8 287.9 230.6 284.8 C227.4 281.7 229.7 272.6 229.0 266.0 C228.3 259.4 226.8 250.2 226.5 245.0 C226.2 239.8 224.3 236.2 227.0 235.0Z"/></clipPath>
<path d="M227.0 235.0 C229.7 233.8 239.2 233.5 242.4 237.7 C245.6 241.9 245.0 252.2 246.0 260.0 C247.0 267.9 250.9 280.7 248.3 284.8 C245.7 288.9 233.8 287.9 230.6 284.8 C227.4 281.7 229.7 272.6 229.0 266.0 C228.3 259.4 226.8 250.2 226.5 245.0 C226.2 239.8 224.3 236.2 227.0 235.0Z" fill="#114b57"/>
<g clip-path="url(#c9)">
<path d="M224.0 235.0 C225.3 226.8 232.0 227.7 234.0 236.0 C236.0 244.3 237.3 276.8 236.0 285.0 C234.7 293.2 228.0 293.3 226.0 285.0 C224.0 276.7 222.7 243.2 224.0 235.0Z" fill="#175a68" filter="url(#bl2)"/>
</g>
<clipPath id="c10"><path d="M317.8 235.3 C320.9 231.2 330.1 231.8 333.0 234.2 C335.9 236.6 335.1 243.4 335.4 249.5 C335.7 255.6 334.8 264.6 334.8 270.7 C334.8 276.8 338.4 283.4 335.4 286.0 C332.4 288.6 320.1 290.5 316.6 286.0 C313.1 281.5 314.0 267.3 314.2 258.9 C314.4 250.4 314.7 239.4 317.8 235.3Z"/></clipPath>
<path d="M317.8 235.3 C320.9 231.2 330.1 231.8 333.0 234.2 C335.9 236.6 335.1 243.4 335.4 249.5 C335.7 255.6 334.8 264.6 334.8 270.7 C334.8 276.8 338.4 283.4 335.4 286.0 C332.4 288.6 320.1 290.5 316.6 286.0 C313.1 281.5 314.0 267.3 314.2 258.9 C314.4 250.4 314.7 239.4 317.8 235.3Z" fill="#114b57"/>
<g clip-path="url(#c10)">
<path d="M310.0 235.0 C311.7 226.7 318.3 227.5 320.0 236.0 C321.7 244.5 321.7 277.7 320.0 286.0 C318.3 294.3 311.7 294.5 310.0 286.0 C308.3 277.5 308.3 243.3 310.0 235.0Z" fill="#0a3a45" filter="url(#bl2)"/>
</g>
<path d="M229.0 283.0 L249.0 283.0 L250.0 289.0 L231.0 290.0Z" fill="#1d2325" />
<path d="M316.0 284.0 L335.0 284.0 L334.0 293.0 L314.0 291.0Z" fill="#1d2325" />
<clipPath id="c11"><path d="M230.6 286.0 C233.5 283.9 245.9 281.7 249.4 285.0 C252.9 288.3 250.8 297.0 251.8 306.0 C252.8 315.0 257.1 333.2 255.3 338.9 C253.5 344.6 244.1 343.3 241.2 340.0 C238.3 336.7 239.3 325.9 237.7 318.9 C236.1 311.8 233.0 303.2 231.8 297.7 C230.6 292.2 227.7 288.1 230.6 286.0Z"/></clipPath>
<path d="M230.6 286.0 C233.5 283.9 245.9 281.7 249.4 285.0 C252.9 288.3 250.8 297.0 251.8 306.0 C252.8 315.0 257.1 333.2 255.3 338.9 C253.5 344.6 244.1 343.3 241.2 340.0 C238.3 336.7 239.3 325.9 237.7 318.9 C236.1 311.8 233.0 303.2 231.8 297.7 C230.6 292.2 227.7 288.1 230.6 286.0Z" fill="#114b57"/>
<g clip-path="url(#c11)">
<path d="M246.0 286.0 C247.0 277.0 253.7 277.0 256.0 286.0 C258.3 295.0 261.0 331.0 260.0 340.0 C259.0 349.0 252.3 349.0 250.0 340.0 C247.7 331.0 245.0 295.0 246.0 286.0Z" fill="#0a3a45" filter="url(#bl2)"/>
</g>
<clipPath id="c12"><path d="M314.2 288.0 C317.3 288.0 329.1 288.9 330.7 294.0 C332.3 299.1 326.6 311.0 323.6 318.9 C320.7 326.8 316.9 337.8 313.0 341.2 C309.1 344.6 300.2 345.5 300.0 339.5 C299.8 333.5 309.9 312.6 311.9 305.0 C313.9 297.4 311.5 296.8 311.9 294.0 C312.3 291.2 311.1 288.0 314.2 288.0Z"/></clipPath>
<path d="M314.2 288.0 C317.3 288.0 329.1 288.9 330.7 294.0 C332.3 299.1 326.6 311.0 323.6 318.9 C320.7 326.8 316.9 337.8 313.0 341.2 C309.1 344.6 300.2 345.5 300.0 339.5 C299.8 333.5 309.9 312.6 311.9 305.0 C313.9 297.4 311.5 296.8 311.9 294.0 C312.3 291.2 311.1 288.0 314.2 288.0Z" fill="#114b57"/>
<g clip-path="url(#c12)">
<path d="M320.0 290.0 C323.3 282.0 333.0 285.3 334.0 294.0 C335.0 302.7 329.3 334.0 326.0 342.0 C322.7 350.0 315.0 350.7 314.0 342.0 C313.0 333.3 316.7 298.0 320.0 290.0Z" fill="#0a3a45" filter="url(#bl2)"/>
</g>
<path d="M242.0 340.0 L256.0 339.0 L257.0 347.0 L243.0 348.0Z" fill="#1d2325" />
<path d="M300.0 339.0 L313.0 341.0 L312.0 348.0 L299.0 346.0Z" fill="#1d2325" />
<path d="M243.6 347.0 C245.8 344.5 252.7 344.8 256.0 345.0 C259.3 345.2 260.9 346.2 263.6 348.0 C266.3 349.8 269.8 353.0 272.0 356.0 C274.2 359.0 277.3 363.5 277.0 366.0 C276.7 368.5 273.2 370.0 270.0 371.0 C266.8 372.0 261.7 372.2 258.0 372.0 C254.3 371.8 250.5 372.0 248.0 370.0 C245.5 368.0 243.7 363.8 243.0 360.0 C242.3 356.2 241.4 349.5 243.6 347.0Z" fill="#114b57" />
<path d="M252.0 366.0 C254.0 365.3 258.7 367.8 262.0 368.0 C265.3 368.2 269.7 366.7 272.0 367.0 C274.3 367.3 277.0 369.0 276.0 370.0 C275.0 371.0 270.3 372.7 266.0 373.0 C261.7 373.3 252.3 373.2 250.0 372.0 C247.7 370.8 250.0 366.7 252.0 366.0Z" fill="#1d2325" />
<path d="M286.0 347.0 C288.5 344.8 293.7 344.4 298.0 345.0 C302.3 345.6 309.7 347.9 311.9 350.7 C314.1 353.5 311.2 358.8 311.0 362.0 C310.8 365.2 313.2 368.7 310.7 370.0 C308.2 371.3 300.4 370.3 296.0 370.0 C291.6 369.7 286.2 370.0 284.0 368.0 C281.8 366.0 282.7 361.5 283.0 358.0 C283.3 354.5 283.5 349.2 286.0 347.0Z" fill="#114b57" />
<path d="M290.0 366.0 C291.7 365.3 298.5 368.0 302.0 368.0 C305.5 368.0 309.7 365.3 311.0 366.0 C312.3 366.7 313.2 371.0 310.0 372.0 C306.8 373.0 295.3 373.0 292.0 372.0 C288.7 371.0 288.3 366.7 290.0 366.0Z" fill="#1d2325" />
<clipPath id="c13"><path d="M248.3 152.3 C243.4 152.8 236.1 156.4 232.6 159.7 C229.1 163.0 227.8 167.3 227.3 172.2 C226.8 177.1 227.5 184.4 229.4 189.0 C231.3 193.6 235.1 195.7 238.8 199.5 C242.5 203.3 247.0 208.9 251.4 212.0 C255.8 215.1 261.1 219.0 265.0 218.3 C268.9 217.6 271.5 212.2 274.5 207.8 C277.5 203.4 281.6 197.3 282.8 192.1 C284.0 186.9 283.2 181.1 281.8 176.4 C280.4 171.7 277.8 167.1 274.5 163.8 C271.2 160.5 266.3 158.4 261.9 156.5 C257.5 154.6 253.2 151.8 248.3 152.3Z"/></clipPath>
<path d="M248.3 152.3 C243.4 152.8 236.1 156.4 232.6 159.7 C229.1 163.0 227.8 167.3 227.3 172.2 C226.8 177.1 227.5 184.4 229.4 189.0 C231.3 193.6 235.1 195.7 238.8 199.5 C242.5 203.3 247.0 208.9 251.4 212.0 C255.8 215.1 261.1 219.0 265.0 218.3 C268.9 217.6 271.5 212.2 274.5 207.8 C277.5 203.4 281.6 197.3 282.8 192.1 C284.0 186.9 283.2 181.1 281.8 176.4 C280.4 171.7 277.8 167.1 274.5 163.8 C271.2 160.5 266.3 158.4 261.9 156.5 C257.5 154.6 253.2 151.8 248.3 152.3Z" fill="#114b57"/>
<g clip-path="url(#c13)">
<path d="M262.0 154.0 C265.0 150.7 273.3 153.7 278.0 158.0 C282.7 162.3 288.3 173.0 290.0 180.0 C291.7 187.0 291.0 192.7 288.0 200.0 C285.0 207.3 277.3 221.7 272.0 224.0 C266.7 226.3 259.2 219.0 256.0 214.0 C252.8 209.0 252.3 200.0 253.0 194.0 C253.7 188.0 258.5 184.7 260.0 178.0 C261.5 171.3 259.0 157.3 262.0 154.0Z" fill="#0a3a45" filter="url(#bl3)"/>
<path d="M250.0 186.0 C252.0 180.3 258.3 177.3 262.0 178.0 C265.7 178.7 270.3 184.7 272.0 190.0 C273.7 195.3 273.0 204.7 272.0 210.0 C271.0 215.3 269.7 221.7 266.0 222.0 C262.3 222.3 252.7 218.0 250.0 212.0 C247.3 206.0 248.0 191.7 250.0 186.0Z" fill="#020505" filter="url(#bl3)" opacity="0.75"/>
<path d="M232.0 160.0 C234.0 154.7 243.7 152.0 248.0 152.0 C252.3 152.0 257.7 155.7 258.0 160.0 C258.3 164.3 253.7 174.0 250.0 178.0 C246.3 182.0 239.0 187.0 236.0 184.0 C233.0 181.0 230.0 165.3 232.0 160.0Z" fill="#175a68" filter="url(#bl3)"/>
</g>
<clipPath id="c14"><path d="M421.0 300.0 C425.1 286.1 438.7 291.7 442.4 300.0 C446.1 308.3 443.0 337.7 443.0 350.0 C443.0 362.3 443.9 366.4 442.4 374.0 C440.9 381.6 435.6 389.4 434.2 395.3 C432.8 401.2 435.2 403.6 434.2 409.5 C433.2 415.4 429.1 424.3 428.3 430.7 C427.5 437.1 429.1 441.4 429.3 448.0 C429.5 454.6 429.5 464.2 429.3 470.0 C429.1 475.8 429.5 479.5 428.3 482.6 C427.1 485.7 424.2 488.3 422.2 488.6 C420.2 488.9 418.0 486.8 416.2 484.6 C414.4 482.4 411.6 479.2 411.1 475.5 C410.6 471.8 411.9 467.8 413.1 462.4 C414.3 457.0 417.8 449.1 418.2 443.0 C418.6 436.9 416.1 432.0 415.3 426.0 C414.5 420.0 413.1 414.1 413.5 407.0 C413.9 399.9 416.4 401.4 417.7 383.6 C418.9 365.8 416.9 313.9 421.0 300.0Z"/></clipPath>
<path d="M421.0 300.0 C425.1 286.1 438.7 291.7 442.4 300.0 C446.1 308.3 443.0 337.7 443.0 350.0 C443.0 362.3 443.9 366.4 442.4 374.0 C440.9 381.6 435.6 389.4 434.2 395.3 C432.8 401.2 435.2 403.6 434.2 409.5 C433.2 415.4 429.1 424.3 428.3 430.7 C427.5 437.1 429.1 441.4 429.3 448.0 C429.5 454.6 429.5 464.2 429.3 470.0 C429.1 475.8 429.5 479.5 428.3 482.6 C427.1 485.7 424.2 488.3 422.2 488.6 C420.2 488.9 418.0 486.8 416.2 484.6 C414.4 482.4 411.6 479.2 411.1 475.5 C410.6 471.8 411.9 467.8 413.1 462.4 C414.3 457.0 417.8 449.1 418.2 443.0 C418.6 436.9 416.1 432.0 415.3 426.0 C414.5 420.0 413.1 414.1 413.5 407.0 C413.9 399.9 416.4 401.4 417.7 383.6 C418.9 365.8 416.9 313.9 421.0 300.0Z" fill="#384288"/>
<g clip-path="url(#c14)">
<path d="M410.0 380.0 C412.0 371.2 421.7 365.3 424.0 372.0 C426.3 378.7 426.0 411.2 424.0 420.0 C422.0 428.8 414.3 431.7 412.0 425.0 C409.7 418.3 408.0 388.8 410.0 380.0Z" fill="#47529a" filter="url(#bl3)" opacity="0.5"/>
<path d="M408.0 450.0 C410.3 444.7 421.0 443.0 424.0 448.0 C427.0 453.0 428.3 474.7 426.0 480.0 C423.7 485.3 413.0 485.0 410.0 480.0 C407.0 475.0 405.7 455.3 408.0 450.0Z" fill="#47529a" filter="url(#bl3)" opacity="0.6"/>
<path d="M430.0 395.0 C432.0 385.0 439.0 380.8 440.0 390.0 C441.0 399.2 438.0 440.0 436.0 450.0 C434.0 460.0 429.0 459.2 428.0 450.0 C427.0 440.8 428.0 405.0 430.0 395.0Z" fill="#2b336e" filter="url(#bl2)"/>
</g>
<clipPath id="c15"><path d="M462.0 333.0 C462.7 327.5 466.5 308.2 470.0 300.0 C473.5 291.8 479.8 283.3 483.0 284.0 C486.2 284.7 487.8 298.3 489.5 304.0 C491.2 309.7 490.2 312.6 493.0 318.0 C495.8 323.4 503.4 329.5 506.3 336.5 C509.2 343.5 509.6 352.1 510.7 360.0 C511.8 367.9 512.7 375.8 513.1 383.6 C513.5 391.5 514.3 399.7 513.1 407.1 C511.9 414.6 508.0 421.6 506.0 428.3 C504.0 435.0 500.7 441.0 501.1 447.2 C501.5 453.4 506.2 460.3 508.2 465.4 C510.2 470.4 512.9 474.0 513.2 477.5 C513.5 481.0 511.7 485.1 510.2 486.6 C508.7 488.1 506.3 488.5 504.1 486.6 C501.9 484.8 499.0 479.9 497.1 475.5 C495.2 471.1 494.9 464.5 493.0 460.3 C491.1 456.1 486.7 453.1 486.0 450.2 C485.3 447.3 488.4 447.0 489.0 443.0 C489.6 439.0 489.8 432.0 489.5 426.0 C489.2 420.0 486.4 413.0 487.2 407.1 C488.0 401.2 495.4 398.5 494.2 390.6 C493.0 382.8 484.8 369.6 480.1 360.0 C475.4 350.4 469.0 337.5 466.0 333.0 C463.0 328.5 461.3 338.5 462.0 333.0Z"/></clipPath>
<path d="M462.0 333.0 C462.7 327.5 466.5 308.2 470.0 300.0 C473.5 291.8 479.8 283.3 483.0 284.0 C486.2 284.7 487.8 298.3 489.5 304.0 C491.2 309.7 490.2 312.6 493.0 318.0 C495.8 323.4 503.4 329.5 506.3 336.5 C509.2 343.5 509.6 352.1 510.7 360.0 C511.8 367.9 512.7 375.8 513.1 383.6 C513.5 391.5 514.3 399.7 513.1 407.1 C511.9 414.6 508.0 421.6 506.0 428.3 C504.0 435.0 500.7 441.0 501.1 447.2 C501.5 453.4 506.2 460.3 508.2 465.4 C510.2 470.4 512.9 474.0 513.2 477.5 C513.5 481.0 511.7 485.1 510.2 486.6 C508.7 488.1 506.3 488.5 504.1 486.6 C501.9 484.8 499.0 479.9 497.1 475.5 C495.2 471.1 494.9 464.5 493.0 460.3 C491.1 456.1 486.7 453.1 486.0 450.2 C485.3 447.3 488.4 447.0 489.0 443.0 C489.6 439.0 489.8 432.0 489.5 426.0 C489.2 420.0 486.4 413.0 487.2 407.1 C488.0 401.2 495.4 398.5 494.2 390.6 C493.0 382.8 484.8 369.6 480.1 360.0 C475.4 350.4 469.0 337.5 466.0 333.0 C463.0 328.5 461.3 338.5 462.0 333.0Z" fill="#384288"/>
<g clip-path="url(#c15)">
<path d="M490.0 455.0 C490.3 450.0 498.7 447.8 502.0 452.0 C505.3 456.2 510.3 475.0 510.0 480.0 C509.7 485.0 503.3 486.2 500.0 482.0 C496.7 477.8 489.7 460.0 490.0 455.0Z" fill="#47529a" filter="url(#bl3)"/>
<path d="M496.0 380.0 C497.3 373.7 504.0 368.7 506.0 372.0 C508.0 375.3 509.3 393.7 508.0 400.0 C506.7 406.3 500.0 413.3 498.0 410.0 C496.0 406.7 494.7 386.3 496.0 380.0Z" fill="#47529a" filter="url(#bl3)"/>
<path d="M504.0 425.0 C506.3 416.7 514.7 395.8 516.0 400.0 C517.3 404.2 514.3 441.7 512.0 450.0 C509.7 458.3 503.3 454.2 502.0 450.0 C500.7 445.8 501.7 433.3 504.0 425.0Z" fill="#2b336e" filter="url(#bl2)"/>
<path d="M481.0 359.0 C482.8 357.7 493.0 358.8 496.0 360.0 C499.0 361.2 499.7 364.2 499.0 366.0 C498.3 367.8 494.3 370.7 492.0 371.0 C489.7 371.3 486.8 370.0 485.0 368.0 C483.2 366.0 479.2 360.3 481.0 359.0Z" fill="#04050c" />
</g>
<path d="M489.0 252.0 C491.2 249.3 498.3 246.3 500.0 248.0 C501.7 249.7 500.3 258.7 499.0 262.0 C497.7 265.3 494.0 267.7 492.0 268.0 C490.0 268.3 487.5 266.7 487.0 264.0 C486.5 261.3 486.8 254.7 489.0 252.0Z" fill="#04050c" filter="url(#bl2)"/>
<path d="M438.0 205.0 L500.0 205.0 L500.0 250.0 L494.0 256.0 L488.8 258.3 L485.7 281.8 L492.0 303.8 L470.0 336.0 L446.0 338.0 L440.0 300.0Z" fill="#384288" />
<path d="M444.0 275.0 C451.3 270.8 480.0 270.8 488.0 275.0 C496.0 279.2 493.3 292.5 492.0 300.0 C490.7 307.5 484.3 314.7 480.0 320.0 C475.7 325.3 470.0 330.0 466.0 332.0 C462.0 334.0 459.0 333.7 456.0 332.0 C453.0 330.3 450.0 327.3 448.0 322.0 C446.0 316.7 444.7 307.8 444.0 300.0 C443.3 292.2 436.7 279.2 444.0 275.0Z" fill="#384288" />
<clipPath id="c16"><path d="M432.0 202.0 C434.3 196.7 443.3 188.7 454.0 186.0 C464.7 183.3 486.3 184.2 496.0 186.0 C505.7 187.8 510.0 192.3 512.0 197.0 C514.0 201.7 509.5 205.2 508.0 214.0 C506.5 222.8 505.2 242.9 503.0 250.0 C500.8 257.1 496.9 255.1 494.5 256.5 C492.1 257.9 490.3 254.1 488.8 258.3 C487.3 262.5 492.8 277.4 485.7 281.8 C478.6 286.2 453.0 290.3 446.0 285.0 C439.0 279.7 444.9 261.2 443.9 250.0 C442.9 238.8 442.0 226.0 440.0 218.0 C438.0 210.0 429.7 207.3 432.0 202.0Z"/></clipPath>
<path d="M432.0 202.0 C434.3 196.7 443.3 188.7 454.0 186.0 C464.7 183.3 486.3 184.2 496.0 186.0 C505.7 187.8 510.0 192.3 512.0 197.0 C514.0 201.7 509.5 205.2 508.0 214.0 C506.5 222.8 505.2 242.9 503.0 250.0 C500.8 257.1 496.9 255.1 494.5 256.5 C492.1 257.9 490.3 254.1 488.8 258.3 C487.3 262.5 492.8 277.4 485.7 281.8 C478.6 286.2 453.0 290.3 446.0 285.0 C439.0 279.7 444.9 261.2 443.9 250.0 C442.9 238.8 442.0 226.0 440.0 218.0 C438.0 210.0 429.7 207.3 432.0 202.0Z" fill="#384288"/>
<g clip-path="url(#c16)">
<path d="M486.0 212.0 C490.0 203.0 502.3 192.5 506.0 198.0 C509.7 203.5 510.0 234.7 508.0 245.0 C506.0 255.3 498.3 258.8 494.0 260.0 C489.7 261.2 483.3 260.0 482.0 252.0 C480.7 244.0 482.0 221.0 486.0 212.0Z" fill="#2b336e" filter="url(#bl3)"/>
<path d="M448.0 262.0 C451.7 259.3 463.0 267.7 470.0 268.0 C477.0 268.3 486.7 261.3 490.0 264.0 C493.3 266.7 497.0 280.7 490.0 284.0 C483.0 287.3 455.0 287.7 448.0 284.0 C441.0 280.3 444.3 264.7 448.0 262.0Z" fill="#2b336e" filter="url(#bl3)" opacity="0.6"/>
<path d="M452.0 226.0 C455.3 221.3 466.3 221.0 472.0 222.0 C477.7 223.0 484.0 227.0 486.0 232.0 C488.0 237.0 487.3 247.7 484.0 252.0 C480.7 256.3 471.3 258.3 466.0 258.0 C460.7 257.7 454.3 255.3 452.0 250.0 C449.7 244.7 448.7 230.7 452.0 226.0Z" fill="#47529a" filter="url(#bl3)" opacity="0.5"/>
</g>
<path d="M454.0 183.0 C460.8 180.5 489.7 179.2 497.0 183.0 C504.3 186.8 498.8 199.5 498.0 206.0 C497.2 212.5 495.3 219.7 492.0 222.0 C488.7 224.3 482.3 221.7 478.0 220.0 C473.7 218.3 469.7 215.7 466.0 212.0 C462.3 208.3 458.0 202.8 456.0 198.0 C454.0 193.2 447.2 185.5 454.0 183.0Z" fill="#04050c" />
<clipPath id="c17"><path d="M420.0 212.0 C422.2 206.5 425.7 204.3 429.0 203.0 C432.3 201.7 437.3 201.5 440.0 204.0 C442.7 206.5 444.5 210.8 445.0 218.0 C445.5 225.2 443.0 235.0 443.0 247.0 C443.0 259.0 444.7 278.6 445.0 290.0 C445.3 301.4 444.0 306.8 445.0 315.3 C446.0 323.8 452.8 336.9 451.0 341.2 C449.2 345.5 438.9 346.3 434.4 341.0 C429.9 335.7 426.1 319.6 423.8 309.4 C421.5 299.2 420.8 288.2 420.3 280.0 C419.8 271.8 421.8 267.3 421.0 260.0 C420.2 252.7 415.7 244.0 415.5 236.0 C415.3 228.0 417.8 217.5 420.0 212.0Z"/></clipPath>
<path d="M420.0 212.0 C422.2 206.5 425.7 204.3 429.0 203.0 C432.3 201.7 437.3 201.5 440.0 204.0 C442.7 206.5 444.5 210.8 445.0 218.0 C445.5 225.2 443.0 235.0 443.0 247.0 C443.0 259.0 444.7 278.6 445.0 290.0 C445.3 301.4 444.0 306.8 445.0 315.3 C446.0 323.8 452.8 336.9 451.0 341.2 C449.2 345.5 438.9 346.3 434.4 341.0 C429.9 335.7 426.1 319.6 423.8 309.4 C421.5 299.2 420.8 288.2 420.3 280.0 C419.8 271.8 421.8 267.3 421.0 260.0 C420.2 252.7 415.7 244.0 415.5 236.0 C415.3 228.0 417.8 217.5 420.0 212.0Z" fill="#384288"/>
<g clip-path="url(#c17)">
<path d="M416.0 212.0 C418.7 204.3 426.3 204.0 430.0 204.0 C433.7 204.0 437.5 206.0 438.0 212.0 C438.5 218.0 435.3 232.3 433.0 240.0 C430.7 247.7 427.2 256.3 424.0 258.0 C420.8 259.7 415.3 257.7 414.0 250.0 C412.7 242.3 413.3 219.7 416.0 212.0Z" fill="#47529a" filter="url(#bl3)"/>
</g>
<clipPath id="c18"><path d="M505.0 212.0 C507.3 206.2 511.8 201.8 515.0 201.0 C518.2 200.2 521.8 202.5 524.0 207.0 C526.2 211.5 528.3 221.3 528.5 228.0 C528.7 234.7 526.7 239.9 525.0 247.0 C523.3 254.1 519.1 265.2 518.1 270.7 C517.1 276.2 519.8 273.6 519.2 280.0 C518.6 286.4 516.6 300.6 514.5 309.4 C512.4 318.2 508.9 328.1 506.3 333.0 C503.8 337.9 502.3 338.7 499.2 338.9 C496.1 339.1 488.4 335.7 487.5 334.2 C486.6 332.7 492.4 333.5 493.5 330.0 C494.6 326.5 493.8 321.0 494.3 313.0 C494.8 305.0 495.5 294.8 496.7 282.0 C497.9 269.2 500.0 247.7 501.4 236.0 C502.8 224.3 502.7 217.8 505.0 212.0Z"/></clipPath>
<path d="M505.0 212.0 C507.3 206.2 511.8 201.8 515.0 201.0 C518.2 200.2 521.8 202.5 524.0 207.0 C526.2 211.5 528.3 221.3 528.5 228.0 C528.7 234.7 526.7 239.9 525.0 247.0 C523.3 254.1 519.1 265.2 518.1 270.7 C517.1 276.2 519.8 273.6 519.2 280.0 C518.6 286.4 516.6 300.6 514.5 309.4 C512.4 318.2 508.9 328.1 506.3 333.0 C503.8 337.9 502.3 338.7 499.2 338.9 C496.1 339.1 488.4 335.7 487.5 334.2 C486.6 332.7 492.4 333.5 493.5 330.0 C494.6 326.5 493.8 321.0 494.3 313.0 C494.8 305.0 495.5 294.8 496.7 282.0 C497.9 269.2 500.0 247.7 501.4 236.0 C502.8 224.3 502.7 217.8 505.0 212.0Z" fill="#384288"/>
<g clip-path="url(#c18)">
<path d="M512.0 208.0 C514.3 202.7 521.3 202.7 524.0 206.0 C526.7 209.3 528.7 221.0 528.0 228.0 C527.3 235.0 523.0 246.3 520.0 248.0 C517.0 249.7 511.3 244.7 510.0 238.0 C508.7 231.3 509.7 213.3 512.0 208.0Z" fill="#47529a" filter="url(#bl3)"/>
<path d="M492.0 290.0 C494.0 282.3 499.0 280.7 500.0 288.0 C501.0 295.3 500.0 326.3 498.0 334.0 C496.0 341.7 489.0 341.3 488.0 334.0 C487.0 326.7 490.0 297.7 492.0 290.0Z" fill="#2b336e" filter="url(#bl2)"/>
</g>
<path d="M435.6 343.6 C438.3 341.3 447.4 338.4 452.1 341.2 C456.8 343.9 463.3 355.8 463.9 360.1 C464.5 364.4 458.8 365.7 455.6 367.2 C452.5 368.7 447.6 369.0 445.0 369.0 C442.4 369.0 441.8 369.5 440.3 367.2 C438.8 364.9 436.8 358.9 436.0 355.0 C435.2 351.1 432.9 345.9 435.6 343.6Z" fill="#384288" />
<path d="M471.0 353.0 C473.2 349.0 482.8 336.6 487.5 334.2 C492.2 331.8 497.4 335.8 499.2 338.9 C500.9 342.0 500.8 349.1 498.0 353.0 C495.2 356.9 486.7 361.6 482.7 362.4 C478.7 363.2 475.9 359.6 474.0 358.0 C472.1 356.4 468.8 357.0 471.0 353.0Z" fill="#384288" />
<path d="M443.9 217 C443 235 442.5 250 443.5 270 C444.5 290 445 305 447 318" fill="none" stroke="#1e2458" stroke-width="1.1" opacity="0.8"/>
<path d="M506 214 C504 230 502 245 500 256" fill="none" stroke="#1e2458" stroke-width="1.1" opacity="0.8"/>
<path d="M449 262 C456 258 462 266 470 262 C478 258 484 266 490 262" fill="none" stroke="#1e2458" stroke-width="1.2" opacity="0.85"/>
<path d="M456 255 C454 240 460 226 470 224 C482 224 488 236 487 252" fill="none" stroke="#283070" stroke-width="1.1" opacity="0.8"/>
<path d="M434 204 C440 212 446 218 456 218 M496 215 C502 212 506 206 510 200" fill="none" stroke="#283070" stroke-width="1" opacity="0.7"/>
<clipPath id="c19"><path d="M473.3 137.7 C468.4 137.7 461.5 140.9 458.0 144.1 C454.5 147.3 453.1 152.4 452.1 157.1 C451.1 161.8 451.1 167.9 452.1 172.4 C453.1 176.9 454.9 180.3 458.0 184.2 C461.1 188.1 467.3 193.4 471.0 196.0 C474.7 198.6 477.3 200.3 480.4 199.5 C483.5 198.7 487.4 194.9 489.8 191.2 C492.2 187.5 493.7 182.4 494.5 177.1 C495.3 171.8 495.7 164.9 494.5 159.4 C493.3 153.9 491.0 147.7 487.5 144.1 C484.0 140.5 478.2 137.7 473.3 137.7Z"/></clipPath>
<path d="M473.3 137.7 C468.4 137.7 461.5 140.9 458.0 144.1 C454.5 147.3 453.1 152.4 452.1 157.1 C451.1 161.8 451.1 167.9 452.1 172.4 C453.1 176.9 454.9 180.3 458.0 184.2 C461.1 188.1 467.3 193.4 471.0 196.0 C474.7 198.6 477.3 200.3 480.4 199.5 C483.5 198.7 487.4 194.9 489.8 191.2 C492.2 187.5 493.7 182.4 494.5 177.1 C495.3 171.8 495.7 164.9 494.5 159.4 C493.3 153.9 491.0 147.7 487.5 144.1 C484.0 140.5 478.2 137.7 473.3 137.7Z" fill="#384288"/>
<g clip-path="url(#c19)">
<path d="M464.0 146.0 C466.3 142.0 475.0 141.7 478.0 144.0 C481.0 146.3 481.7 153.7 482.0 160.0 C482.3 166.3 481.7 177.7 480.0 182.0 C478.3 186.3 474.7 188.3 472.0 186.0 C469.3 183.7 465.3 174.7 464.0 168.0 C462.7 161.3 461.7 150.0 464.0 146.0Z" fill="#47529a" filter="url(#bl3)"/>
<path d="M486.0 150.0 C487.7 148.0 494.0 153.5 496.0 158.0 C498.0 162.5 499.0 170.7 498.0 177.0 C497.0 183.3 492.7 193.8 490.0 196.0 C487.3 198.2 482.7 194.3 482.0 190.0 C481.3 185.7 485.3 176.7 486.0 170.0 C486.7 163.3 484.3 152.0 486.0 150.0Z" fill="#2b336e" filter="url(#bl3)"/>
<path d="M462.0 186.0 C463.7 184.7 475.0 191.3 480.0 192.0 C485.0 192.7 491.3 188.0 492.0 190.0 C492.7 192.0 487.7 202.3 484.0 204.0 C480.3 205.7 473.7 203.0 470.0 200.0 C466.3 197.0 460.3 187.3 462.0 186.0Z" fill="#2b336e" filter="url(#bl3)"/>
</g></svg>
<svg class="a" style="left:0;top:0" width="760" height="567" viewBox="6 41 760 567">
<rect x="35" y="553.7" width="2" height="24.3" fill="#0000ff"/>
<rect x="37" y="577" width="24" height="2" fill="#ff0000"/>
<rect x="35" y="578" width="2" height="6" fill="#00ff00"/>
<path d="M39.4 550.2 H44.6 L39.4 558 H44.9" fill="none" stroke="#2a2ae8" stroke-width="1.4"/>
<path d="M64.2 573.6 L70.2 582.3 M70.2 573.6 L64.2 582.3" fill="none" stroke="#ee2020" stroke-width="1.4"/>
<path d="M39 579.9 L42.2 584.2 L45.4 579.9 M42.2 584.2 V588.6" fill="none" stroke="#10e010" stroke-width="1.4"/>
</svg>
</div>
<div class="a" style="left:766px;top:41px;width:5px;height:718px;background:#1a1a1a"></div>

<!-- log -->
<div class="a" style="left:6px;top:608px;width:760px;height:5px;background:#151515"></div>
<div class="a" style="left:6px;top:613px;width:760px;height:142px;background:#1b1b1b;overflow:hidden">
  <div class="a" style="left:0;top:0;width:745px;height:142px;overflow:hidden;font-family:'Liberation Mono',monospace;font-size:11.68px;color:#d2d2d2">
    <div class="a" style="left:23px;top:23px;width:4px;height:4px;border-radius:50%;background:#e0e0e0"></div>
    <div class="t" style="left:39px;top:22.5px;transform:scaleY(1.17);transform-origin:0 100%">Using Mixamo template for source skeleton.</div>
    <div class="a" style="left:23px;top:45px;width:4px;height:4px;border-radius:50%;background:#e0e0e0"></div>
    <div class="t" style="left:39px;top:44.5px;transform:scaleY(1.17);transform-origin:0 100%">Using Fortnite Humanoid template for target skeleton.</div>
    <div class="a" style="left:23px;top:67px;width:4px;height:4px;border-radius:50%;background:#e0e0e0"></div>
    <div class="t" style="left:39px;top:66.5px;transform:scaleY(1.17);transform-origin:0 100%">Success! The IK Retargeter is ready to transfer animation from the source, Defeated to the target, SKM_Manny.</div>
  </div>
  <div class="a" style="left:738px;top:15px;width:7px;height:100px;background:linear-gradient(to right,rgba(18,18,18,0),rgba(18,18,18,0.5) 60%,#101010 85%,#121212)"></div>
  <div class="a" style="left:17px;top:117px;width:680px;height:8px;border-radius:4px;background:#5c5c5c"></div>
</div>

<!-- details panel -->
<div class="a" style="left:771px;top:41px;width:507px;height:281px;background:#1b1b1b"></div>
<div class="hdr" style="top:41px"></div>
<div class="tri" style="left:775.8px;top:50.8px"></div>
<div class="ht" style="top:48.5px">Source</div>
<div class="row" style="top:68px;height:57px"></div>
<div class="lbl" style="top:91px">Source Skeletal Mesh</div>

<div class="hdr" style="top:126px"></div>
<div class="tri" style="left:775.8px;top:135.8px"></div>
<div class="ht" style="top:133.5px">Target</div>
<div class="row" style="top:153px;height:57px"></div>
<div class="lbl" style="top:176px">Target Skeletal Mesh</div>

<div class="hdr" style="top:211px"></div>
<div class="tri" style="left:775.8px;top:220.8px"></div>
<div class="ht" style="top:218.5px">Retargeter</div>
<div class="row" style="top:238px;height:26px"></div>
<div class="lbl" style="top:246px">Auto Generate Retargeter</div>
<div class="row" style="top:265px;height:57px"></div>
<div class="lbl" style="top:288px;color:#6e6e6e">Retarget Asset</div>

<div class="vdiv" style="left:974px;top:68px;height:57px"></div>
<div class="vdiv" style="left:1255px;top:68px;height:57px"></div>
<div class="vdiv" style="left:974px;top:153px;height:57px"></div>
<div class="vdiv" style="left:1255px;top:153px;height:57px"></div>
<div class="vdiv" style="left:974px;top:238px;height:26px"></div>
<div class="vdiv" style="left:1255px;top:238px;height:26px"></div>
<div class="vdiv" style="left:974px;top:265px;height:57px"></div>
<div class="vdiv" style="left:1255px;top:265px;height:57px"></div>

<!-- source thumb -->
<div class="thumb" style="top:74px"><svg class="a" style="left:0;top:0" width="48" height="48"><defs><pattern id="pat1" width="10" height="10" patternUnits="userSpaceOnUse"><rect width="10" height="10" fill="#050505"/><rect width="5" height="5" fill="#0b0b0b"/><rect x="5" y="5" width="5" height="5" fill="#0b0b0b"/></pattern></defs><rect width="48" height="48" fill="url(#pat1)"/><polygon points="21.5,9.2 19.1,11.6 18.4,15.7 18.1,20.5 17.1,23.9 17.4,28.0 18.4,33.4 19.1,38.8 17.4,42.2 17.7,43.6 20.5,41.6 21.1,36.1 22.5,30.0 23.9,28.0 25.2,28.6 25.9,34.1 26.6,38.8 28.0,42.2 28.3,45.0 30.0,43.6 29.3,38.8 28.6,33.4 28.0,27.3 30.0,26.6 30.7,23.9 30.0,19.8 30.3,15.0 30.7,11.6 26.6,9.6 25.2,8.9" fill="#56b4c4"/><ellipse cx="24.5" cy="5.8" rx="2.9" ry="3.5" fill="#5ec0ce"/><path d="M20 13 L28 12 L29 18 L22 19Z" fill="#7cd0dc" opacity="0.6"/><path d="M21 22 L27 21 M20 25 L27 24" stroke="#3a6a72" stroke-width="0.8"/></svg><div class="a" style="left:0;bottom:0;width:48px;height:2px;background:#f0a2ee"></div></div>
<div class="combo" style="top:73.5px"><div class="ct">Defeated</div>
 <svg class="chev" width="10" height="7" viewBox="0 0 10 7"><path d="M0.8 1 L5 5.2 L9.2 1" fill="none" stroke="#cfcfcf" stroke-width="1.3"/></svg></div>

<!-- target thumb -->
<div class="thumb" style="top:159px"><svg class="a" style="left:0;top:0" width="48" height="48"><defs><pattern id="pat2" width="10" height="10" patternUnits="userSpaceOnUse"><rect width="10" height="10" fill="#050505"/><rect width="5" height="5" fill="#0b0b0b"/><rect x="5" y="5" width="5" height="5" fill="#0b0b0b"/></pattern></defs><rect width="48" height="48" fill="url(#pat2)"/><polygon points="23.2,9.2 20.5,11.6 18.4,15.0 15.0,18.4 12.3,21.1 12.6,22.8 15.0,20.5 19.1,17.1 21.1,19.8 21.1,26.6 20.8,33.4 21.1,38.8 19.1,42.2 20.5,43.3 22.5,40.2 23.9,33.4 24.5,27.3 25.2,33.4 25.9,38.8 26.6,43.6 28.0,42.9 28.0,36.1 27.6,28.6 27.3,20.5 30.0,17.1 32.0,20.5 32.7,23.2 34.1,25.6 35.1,23.9 34.1,20.5 32.0,16.4 30.0,11.6 27.3,9.9 25.9,8.9" fill="#a4b0e6"/><ellipse cx="24.5" cy="6" rx="2.4" ry="3" fill="#a8b4ea"/></svg><div class="a" style="left:0;bottom:0;width:48px;height:2px;background:#f0a2ee"></div></div>
<div class="combo" style="top:158.5px"><div class="ct">SKM_Manny</div>
 <svg class="chev" width="10" height="7" viewBox="0 0 10 7"><path d="M0.8 1 L5 5.2 L9.2 1" fill="none" stroke="#cfcfcf" stroke-width="1.3"/></svg></div>

<!-- checkbox -->
<div class="a" style="left:987px;top:242.5px;width:17px;height:17px;border-radius:2px;background:#0e0e0e;border:1px solid #2c2c2c"></div>
<svg class="a" style="left:987px;top:242.5px" width="17" height="17" viewBox="0 0 17 17"><path d="M3.6 8.6 L6.9 11.8 L13.2 5.2" fill="none" stroke="#1a8cf8" stroke-width="2"/></svg>

<!-- retarget asset -->
<div class="thumb" style="top:270.5px;background:#1c1c1c"><div class="t" style="left:14px;top:20px;font-size:8.4px;color:#a0a0a0;transform:scaleX(0.9)">None</div><div class="a" style="left:0;bottom:0;width:48px;height:2px;background:#1f5fa8"></div></div>
<div class="combo" style="top:269.8px;height:22px;background:#383838;border-color:#4a4a4a"><div class="ct" style="color:#9c9c9c">None</div>
 <svg class="chev" width="10" height="7" viewBox="0 0 10 7"><path d="M0.8 1 L5 5.2 L9.2 1" fill="none" stroke="#9c9c9c" stroke-width="1.3"/></svg></div>

<!-- separator strip -->
<div class="a" style="left:771px;top:322px;width:507px;height:8px;background:#161616"></div>

<!-- asset picker -->
<div class="a" style="left:777px;top:368px;width:495px;height:24px;background:#2f2f2f"></div>
<div class="t" style="left:781px;top:374.5px;font-size:12.4px;color:#d0d0d0">Name</div>
<div class="a" style="left:821px;top:377.5px;width:0;height:0;border-left:3.7px solid transparent;border-right:3.7px solid transparent;border-bottom:4.7px solid #d0d0d0"></div>
<div class="a" style="left:777px;top:392px;width:495px;height:304px;background:#1a1a1a"></div>
<div class="a" style="left:777px;top:394px;width:495px;height:16px;background:#0070e0"></div>
<div class="t" style="left:802.5px;top:396.5px;font-size:12.5px;color:#ffffff">Defeated_Anim</div>

<div class="a" style="left:821.5px;top:330.3px;width:396px;height:23px;border-radius:12px;background:#0f0f0f;border:1px solid #333333"></div>
<div class="t" style="left:848px;top:335.5px;font-size:12.9px;color:#6a6a6a">Search Assets</div>

<div class="t" style="left:779px;top:708px;font-size:12.6px;color:#c0c0c0">1 item (1 selected)</div>
<div class="btn" style="left:781px;width:243px">Export Retarget Assets</div>
<div class="btn" style="left:1032px;width:244px">Export Animations</div>

<!-- icons -->
<svg class="a" style="left:1048px;top:98.1px" width="50" height="20" viewBox="1048 98.1 50 20"><path d="M1063.2 103.5 A7.2 7.2 0 1 0 1063.2 112.7" fill="none" stroke="#c8c8c8" stroke-width="1.4"/><path d="M1065.2 108.1 L1054.2 108.1 M1058.6 104.19999999999999 L1054.4 108.1 L1058.6 112.0" fill="none" stroke="#c8c8c8" stroke-width="1.5"/><path d="M1076.2 100.1 L1081.6 100.1 L1083.6 102.69999999999999 L1091.2 102.69999999999999 L1091.2 114.1 L1076.2 114.1Z" fill="#c8c8c8"/><circle cx="1087.8" cy="110.0" r="4.2" fill="#232323"/><circle cx="1087.8" cy="110.0" r="2.9" fill="none" stroke="#c8c8c8" stroke-width="1.2"/><path d="M1085.6 112.3 L1082.6 115.5" stroke="#232323" stroke-width="2.8"/><path d="M1085.6 112.3 L1082.6 115.5" stroke="#c8c8c8" stroke-width="1.2"/></svg><svg class="a" style="left:1048px;top:183.1px" width="50" height="20" viewBox="1048 183.1 50 20"><path d="M1063.2 188.5 A7.2 7.2 0 1 0 1063.2 197.7" fill="none" stroke="#c8c8c8" stroke-width="1.4"/><path d="M1065.2 193.1 L1054.2 193.1 M1058.6 189.2 L1054.4 193.1 L1058.6 197.0" fill="none" stroke="#c8c8c8" stroke-width="1.5"/><path d="M1076.2 185.1 L1081.6 185.1 L1083.6 187.7 L1091.2 187.7 L1091.2 199.1 L1076.2 199.1Z" fill="#c8c8c8"/><circle cx="1087.8" cy="195.0" r="4.2" fill="#232323"/><circle cx="1087.8" cy="195.0" r="2.9" fill="none" stroke="#c8c8c8" stroke-width="1.2"/><path d="M1085.6 197.29999999999998 L1082.6 200.5" stroke="#232323" stroke-width="2.8"/><path d="M1085.6 197.29999999999998 L1082.6 200.5" stroke="#c8c8c8" stroke-width="1.2"/></svg><svg class="a" style="left:1048px;top:295.1px" width="50" height="20" viewBox="1048 295.1 50 20"><path d="M1063.2 300.5 A7.2 7.2 0 1 0 1063.2 309.7" fill="none" stroke="#6e6e6e" stroke-width="1.4"/><path d="M1065.2 305.1 L1054.2 305.1 M1058.6 301.20000000000005 L1054.4 305.1 L1058.6 309.0" fill="none" stroke="#6e6e6e" stroke-width="1.5"/><path d="M1076.2 297.1 L1081.6 297.1 L1083.6 299.70000000000005 L1091.2 299.70000000000005 L1091.2 311.1 L1076.2 311.1Z" fill="#6e6e6e"/><circle cx="1087.8" cy="307.0" r="4.2" fill="#232323"/><circle cx="1087.8" cy="307.0" r="2.9" fill="none" stroke="#6e6e6e" stroke-width="1.2"/><path d="M1085.6 309.3 L1082.6 312.5" stroke="#232323" stroke-width="2.8"/><path d="M1085.6 309.3 L1082.6 312.5" stroke="#6e6e6e" stroke-width="1.2"/></svg><svg class="a" style="left:1258px;top:87.8px" width="18" height="16" viewBox="1258 87.8 18 16"><path d="M1265.6 92.39999999999999 L1262.6 95.8 L1265.6 98.89999999999999 M1262.8 95.8 L1270.4 95.8 A2.6 2.6 0 0 1 1270.4 101.0 L1269.4 101.0" fill="none" stroke="#c6c6c6" stroke-width="1.4" stroke-linecap="round" stroke-linejoin="round"/></svg><svg class="a" style="left:1258px;top:172.8px" width="18" height="16" viewBox="1258 172.8 18 16"><path d="M1265.6 177.4 L1262.6 180.8 L1265.6 183.9 M1262.8 180.8 L1270.4 180.8 A2.6 2.6 0 0 1 1270.4 186.0 L1269.4 186.0" fill="none" stroke="#c6c6c6" stroke-width="1.4" stroke-linecap="round" stroke-linejoin="round"/></svg><svg class="a" style="left:780px;top:334px" width="36" height="16" viewBox="780 334 36 16"><rect x="782.8" y="336" width="14.4" height="1.9" rx="0.5" fill="#d0d0d0"/><rect x="785.8" y="341" width="8.2" height="2" rx="0.5" fill="#d0d0d0"/><rect x="788" y="345.9" width="4" height="2" rx="0.5" fill="#d0d0d0"/><path d="M803.3 339.6 L807.8 344.1 L812.4 339.6" fill="none" stroke="#d0d0d0" stroke-width="1.3"/></svg><svg class="a" style="left:824px;top:333px" width="20" height="18" viewBox="824 333 20 18"><circle cx="832.6" cy="340.9" r="4.6" fill="none" stroke="#d0d0d0" stroke-width="1.3"/><path d="M836 344.3 L839.8 348.1" stroke="#d0d0d0" stroke-width="1.4" stroke-linecap="round"/></svg><svg class="a" style="left:1222px;top:332px" width="50" height="20" viewBox="1222 332 50 20"><path d="M1225.9 338 L1225.9 336.8 Q1225.9 336 1226.8 336 L1232 336 L1233.9 338Z" fill="#c6c6c6"/><rect x="1225.9" y="338.9" width="16.1" height="9.1" rx="0.6" fill="#c6c6c6"/><circle cx="1233.4" cy="341.8" r="1.8" fill="#8a8a8a"/><path d="M1230.1 348 Q1230.1 345 1233.4 345 Q1236.8 345 1236.8 348Z" fill="#8a8a8a"/><rect x="1262.90" y="340.30" width="2.6" height="3.2" fill="#d0d0d0" transform="rotate(90 1264.20 341.90)"/><rect x="1261.08" y="344.68" width="2.6" height="3.2" fill="#d0d0d0" transform="rotate(135 1262.38 346.28)"/><rect x="1256.70" y="346.50" width="2.6" height="3.2" fill="#d0d0d0" transform="rotate(180 1258.00 348.10)"/><rect x="1252.32" y="344.68" width="2.6" height="3.2" fill="#d0d0d0" transform="rotate(225 1253.62 346.28)"/><rect x="1250.50" y="340.30" width="2.6" height="3.2" fill="#d0d0d0" transform="rotate(270 1251.80 341.90)"/><rect x="1252.32" y="335.92" width="2.6" height="3.2" fill="#d0d0d0" transform="rotate(315 1253.62 337.52)"/><rect x="1256.70" y="334.10" width="2.6" height="3.2" fill="#d0d0d0" transform="rotate(360 1258.00 335.70)"/><rect x="1261.08" y="335.92" width="2.6" height="3.2" fill="#d0d0d0" transform="rotate(405 1262.38 337.52)"/><circle cx="1258" cy="341.9" r="5.6" fill="#d0d0d0"/><circle cx="1258" cy="341.9" r="3.7" fill="#242424"/><circle cx="1258" cy="341.9" r="2.4" fill="none" stroke="#7a7a7a" stroke-width="0.9"/></svg><svg class="a" style="left:783px;top:394px" width="14" height="16" viewBox="783 394 14 16"><path d="M784.2 395.3 L791.7 395.3 L794.9 398.5 L794.9 408.8 L784.2 408.8Z" fill="#5a8a48"/><path d="M786.4 398.2 V407.7 M789.4 398.2 V407.7 M792.4 398.2 V407.7 M785 400.4 H793.8 M785 403.4 H793.8 M785 406.4 H793.8" stroke="#2a4a24" stroke-width="0.9"/></svg>
</div></body></html>
